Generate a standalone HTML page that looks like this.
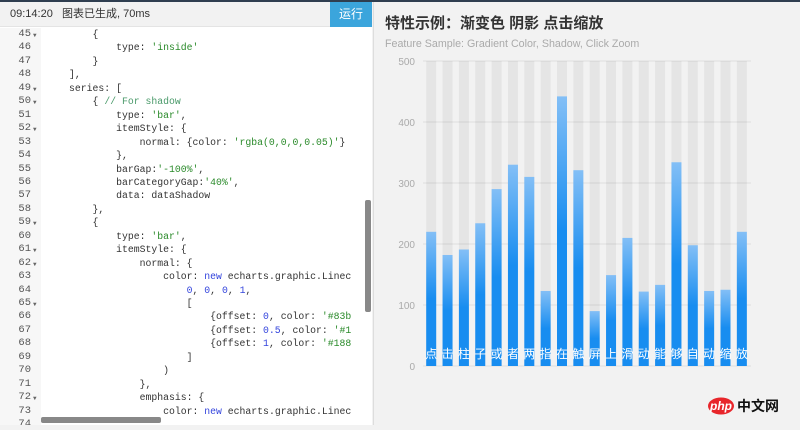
<!DOCTYPE html>
<html><head><meta charset="utf-8"><style>
*{margin:0;padding:0;box-sizing:border-box}
body{width:800px;height:425px;overflow:hidden;background:#f2f2f2;position:relative;font-family:"Liberation Sans","Noto Sans CJK SC",sans-serif}
#topline{position:absolute;left:0;top:0;width:800px;height:2px;background:#2f3e50}
#left{position:absolute;left:0;top:2px;width:372px;height:423px;background:#fff;overflow:hidden}
#bar{position:absolute;left:0;top:0;width:372px;height:25px;background:#f2f2f2;border-bottom:1px solid #e4e4e4;font-size:11px;color:#333;line-height:25px;padding-left:10px}
#run{position:absolute;right:0;top:0;width:42px;height:25px;background:#3ba5dc;color:#fff;text-align:center;font-size:12px}
#gutter{position:absolute;left:0;top:26px;width:41px;height:400px;background:#f7f7f7}
.code{position:absolute;left:0;top:26px;font-family:"Liberation Mono","DejaVu Sans Mono",monospace;font-size:9.8px;line-height:13.45px;white-space:pre;color:#333}
.ln{position:absolute;left:0;width:31px;text-align:right;color:#555;font-size:10.5px}
.fa{position:absolute;left:33px;font-size:6px;color:#666}
.s{color:#2a8a2a}.c{color:#4a9a6a}.n{color:#3344dd}
#vs{position:absolute;left:365px;top:198px;width:6px;height:112px;background:#888;border-radius:2px}
#hs{position:absolute;left:41px;top:415px;width:120px;height:6px;background:#888;border-radius:2px}
#right{position:absolute;left:373px;top:2px;width:427px;height:423px;background:#f2f2f2;border-left:1px solid #ddd}
</style></head><body>
<div id="topline"></div>
<div id="left">
<div id="bar">09:14:20&nbsp;&nbsp;&nbsp;图表已生成, 70ms<div id="run">运行</div></div>
<div id="gutter"></div>
<div class="code" id="code"></div>
<div id="vs"></div><div id="hs"></div>
</div>
<div id="right">
<svg width="427" height="423" viewBox="373 2 427 423" xmlns="http://www.w3.org/2000/svg" font-family="Liberation Sans, Noto Sans CJK SC, sans-serif">
<defs><linearGradient id="g" x1="0" y1="0" x2="0" y2="1"><stop offset="0" stop-color="#83bff6"/><stop offset="0.5" stop-color="#188df0"/><stop offset="1" stop-color="#188df0"/></linearGradient></defs>
<text x="384" y="28" font-size="15" font-weight="bold" fill="#333">特性示例：渐变色 阴影 点击缩放</text>
<text x="384" y="47" font-size="10.7" fill="#aaa">Feature Sample: Gradient Color, Shadow, Click Zoom</text>
<g stroke="#ddd" stroke-width="1">
<line x1="422" y1="61" x2="750" y2="61"/><line x1="422" y1="122" x2="750" y2="122"/><line x1="422" y1="183" x2="750" y2="183"/><line x1="422" y1="244" x2="750" y2="244"/><line x1="422" y1="305" x2="750" y2="305"/><line x1="422" y1="366" x2="750" y2="366"/>
</g>
<g font-size="10" fill="#aaa" text-anchor="end">
<text x="414" y="65">500</text><text x="414" y="126">400</text><text x="414" y="187">300</text><text x="414" y="248">200</text><text x="414" y="309">100</text><text x="414" y="370">0</text>
</g>
<g id="bars"></g>
<g transform="translate(708,397)">
<ellipse cx="12" cy="9" rx="13" ry="8.5" fill="#e8262b"/>
<text x="12" y="13" font-size="12" fill="#fff" text-anchor="middle" font-style="italic" font-weight="bold">php</text>
<text x="28" y="14" font-size="14" font-weight="bold" fill="#111">中文网</text>
</g>
</svg>
</div>
<script>
var vals=[220,182,191,234,290,330,310,123,442,321,90,149,210,122,133,334,198,123,125,220];
var labs="点击柱子或者两指在触屏上滑动能够自动缩放";
var s="";
for(var i=0;i<20;i++){var x=422+i*16.35+3.2;var h=vals[i]*0.61;
s+='<rect x="'+x+'" y="61" width="10" height="305" fill="rgba(0,0,0,0.05)"/>';
s+='<rect x="'+x+'" y="'+(366-h)+'" width="10" height="'+h+'" fill="url(#g)"/>';
s+='<text x="'+(x+5)+'" y="358" font-size="12" fill="#fff" text-anchor="middle">'+labs[i]+'</text>';}
document.getElementById("bars").innerHTML=s;
var L=[
[45,1,"            {"],[46,0,"                type: <s>'inside'</s>"],[47,0,"            }"],[48,0,"        ],"],
[49,1,"        series: ["],[50,1,"            { <c>// For shadow</c>"],[51,0,"                type: <s>'bar'</s>,"],
[52,1,"                itemStyle: {"],[53,0,"                    normal: {color: <s>'rgba(0,0,0,0.05)'</s>}"],[54,0,"                },"],
[55,0,"                barGap:<s>'-100%'</s>,"],[56,0,"                barCategoryGap:<s>'40%'</s>,"],[57,0,"                data: dataShadow"],
[58,0,"            },"],[59,1,"            {"],[60,0,"                type: <s>'bar'</s>,"],[61,1,"                itemStyle: {"],
[62,1,"                    normal: {"],[63,0,"                        color: <n>new</n> echarts.graphic.Linec"],
[64,0,"                            <n>0</n>, <n>0</n>, <n>0</n>, <n>1</n>,"],[65,1,"                            ["],
[66,0,"                                {offset: <n>0</n>, color: <s>'#83b</s>"],[67,0,"                                {offset: <n>0.5</n>, color: <s>'#1</s>"],
[68,0,"                                {offset: <n>1</n>, color: <s>'#188</s>"],[69,0,"                            ]"],[70,0,"                        )"],
[71,0,"                    },"],[72,1,"                    emphasis: {"],[73,0,"                        color: <n>new</n> echarts.graphic.Linec"],[74,0,""]];
var h="";
for(var j=0;j<L.length;j++){var t=j*13.45;
h+='<div class="ln" style="top:'+t+'px">'+L[j][0]+'</div>';
if(L[j][1])h+='<div class="fa" style="top:'+(t+1)+'px">▼</div>';
var c=L[j][2].replace(/<s>/g,'<span class="s">').replace(/<c>/g,'<span class="c">').replace(/<n>/g,'<span class="n">').replace(/<\/[scn]>/g,'</span>');
h+='<div style="position:absolute;left:22px;top:'+t+'px;clip-path:inset(0 0 0 20px)">'+c+'</div>';}
document.getElementById("code").innerHTML=h;
</script>
</body></html>
